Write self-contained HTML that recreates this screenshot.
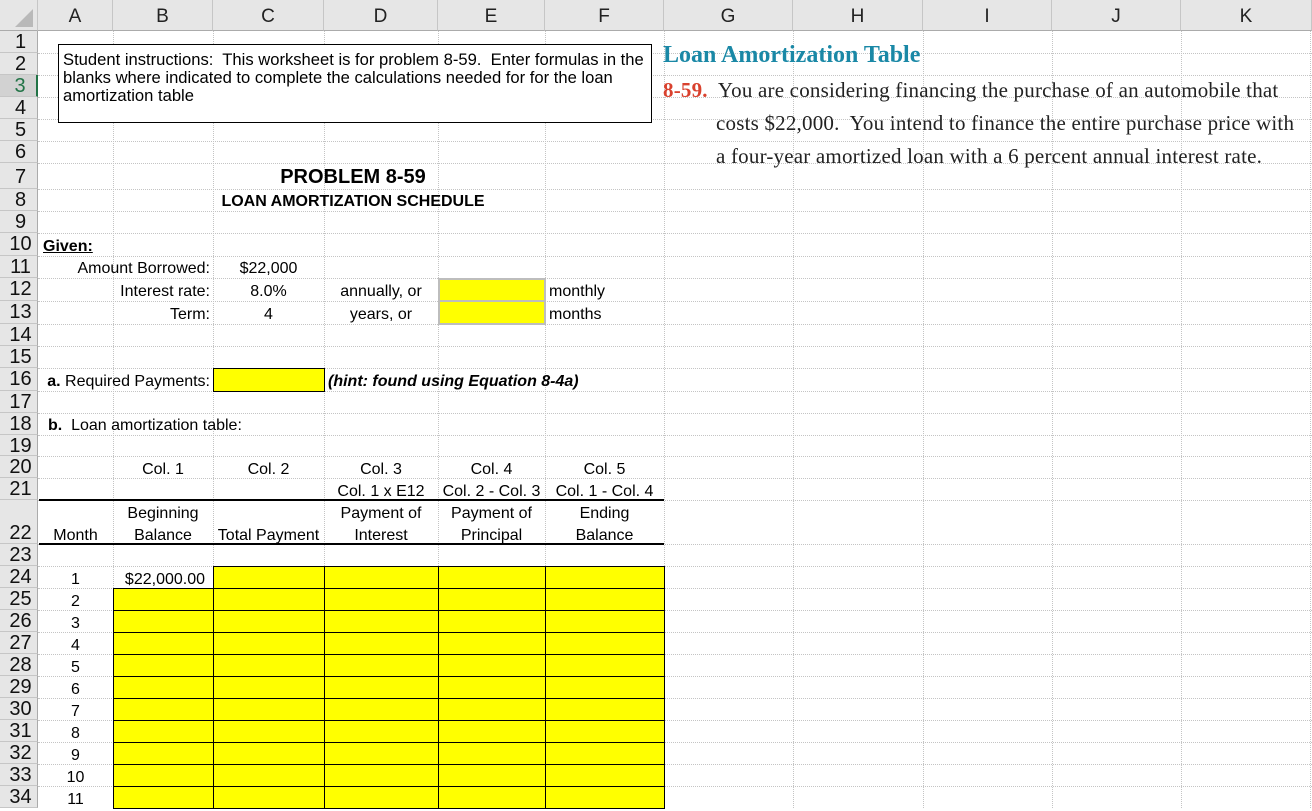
<!DOCTYPE html>
<html><head><meta charset="utf-8"><style>
*{margin:0;padding:0;box-sizing:border-box}
body{width:1312px;height:808px;overflow:hidden;background:#fff;position:relative;font-family:"Liberation Sans",Arial,sans-serif;color:#000}
.h{position:absolute;left:38px;width:1274px;height:0;border-top:1px dotted #c4c4c4}
.v{position:absolute;top:31px;height:777px;width:0;border-left:1px dotted #c4c4c4}
.ch{position:absolute;top:0;height:31px;background:#e6e6e6;border-right:1px solid #c6c6c6;border-bottom:1px solid #ababab;font-size:19px;text-align:center;line-height:34px;color:#222}
.rh{position:absolute;left:0;width:38px;background:#e6e6e6;border-right:1px solid #ababab;border-bottom:1px solid #c6c6c6;font-size:20px;line-height:22px;text-align:center;padding-left:4px;color:#111}
.c{position:absolute;font-size:16px;white-space:nowrap;line-height:22px;height:22px;margin-top:2px}
.y{position:absolute;background:#ffff00;border:1px solid #000}
</style></head><body>
<div class="ch" style="left:0;width:38px"><svg width="38" height="31" style="position:absolute;left:0;top:0"><polygon points="33,9 33,27 15,27" fill="#b9b9b9"/></svg></div>
<div class="ch" style="left:38px;width:75px">A</div>
<div class="ch" style="left:113px;width:100px">B</div>
<div class="ch" style="left:213px;width:111px">C</div>
<div class="ch" style="left:324px;width:114px">D</div>
<div class="ch" style="left:438px;width:107px">E</div>
<div class="ch" style="left:545px;width:119px">F</div>
<div class="ch" style="left:664px;width:129px">G</div>
<div class="ch" style="left:793px;width:130px">H</div>
<div class="ch" style="left:923px;width:129px">I</div>
<div class="ch" style="left:1052px;width:129px">J</div>
<div class="ch" style="left:1181px;width:131px">K</div>

<div class="h" style="top:53px"></div><div class="h" style="top:75px"></div><div class="h" style="top:97px"></div><div class="h" style="top:119px"></div><div class="h" style="top:141px"></div><div class="h" style="top:163px"></div><div class="h" style="top:189px"></div><div class="h" style="top:211px"></div><div class="h" style="top:233px"></div><div class="h" style="top:256px"></div><div class="h" style="top:278px"></div><div class="h" style="top:301px"></div><div class="h" style="top:324px"></div><div class="h" style="top:346px"></div><div class="h" style="top:368px"></div><div class="h" style="top:391px"></div><div class="h" style="top:413px"></div><div class="h" style="top:435px"></div><div class="h" style="top:456px"></div><div class="h" style="top:478px"></div><div class="h" style="top:500px"></div><div class="h" style="top:544px"></div><div class="h" style="top:566px"></div><div class="h" style="top:588px"></div><div class="h" style="top:610px"></div><div class="h" style="top:632px"></div><div class="h" style="top:654px"></div><div class="h" style="top:676px"></div><div class="h" style="top:698px"></div><div class="h" style="top:720px"></div><div class="h" style="top:742px"></div><div class="h" style="top:764px"></div><div class="h" style="top:786px"></div>
<div class="v" style="left:113px"></div><div class="v" style="left:213px"></div><div class="v" style="left:324px"></div><div class="v" style="left:438px"></div><div class="v" style="left:545px"></div><div class="v" style="left:664px"></div><div class="v" style="left:793px"></div><div class="v" style="left:923px"></div><div class="v" style="left:1052px"></div><div class="v" style="left:1181px"></div><div class="v" style="left:1310px"></div>

<div class="rh" style="top:31px;height:22px">1</div>
<div class="rh" style="top:53px;height:22px">2</div>
<div class="rh" style="top:75px;height:22px;background:#d2d2d2;color:#217346;border-right:2px solid #217346">3</div>
<div class="rh" style="top:97px;height:22px">4</div>
<div class="rh" style="top:119px;height:22px">5</div>
<div class="rh" style="top:141px;height:22px">6</div>
<div class="rh" style="top:163px;height:26px;line-height:28px">7</div>
<div class="rh" style="top:189px;height:22px">8</div>
<div class="rh" style="top:211px;height:22px">9</div>
<div class="rh" style="top:233px;height:23px">10</div>
<div class="rh" style="top:256px;height:22px">11</div>
<div class="rh" style="top:278px;height:23px">12</div>
<div class="rh" style="top:301px;height:23px">13</div>
<div class="rh" style="top:324px;height:22px">14</div>
<div class="rh" style="top:346px;height:22px">15</div>
<div class="rh" style="top:368px;height:23px">16</div>
<div class="rh" style="top:391px;height:22px">17</div>
<div class="rh" style="top:413px;height:22px">18</div>
<div class="rh" style="top:435px;height:21px">19</div>
<div class="rh" style="top:456px;height:22px">20</div>
<div class="rh" style="top:478px;height:22px">21</div>
<div class="rh" style="top:500px;height:44px;line-height:66px">22</div>
<div class="rh" style="top:544px;height:22px">23</div>
<div class="rh" style="top:566px;height:22px">24</div>
<div class="rh" style="top:588px;height:22px">25</div>
<div class="rh" style="top:610px;height:22px">26</div>
<div class="rh" style="top:632px;height:22px">27</div>
<div class="rh" style="top:654px;height:22px">28</div>
<div class="rh" style="top:676px;height:22px">29</div>
<div class="rh" style="top:698px;height:22px">30</div>
<div class="rh" style="top:720px;height:22px">31</div>
<div class="rh" style="top:742px;height:22px">32</div>
<div class="rh" style="top:764px;height:22px">33</div>
<div class="rh" style="top:786px;height:22px">34</div>

<div style="position:absolute;left:58px;top:44px;width:594px;height:79px;border:1px solid #000;background:#fff;font-size:16.6px;line-height:18px;padding:6px 0 0 4px;white-space:nowrap">Student instructions:&nbsp; This worksheet is for problem 8-59.&nbsp; Enter formulas in the<br>blanks where indicated to complete the calculations needed for for the loan<br>amortization table</div>

<div style="position:absolute;left:663px;top:42px;font-family:'Liberation Serif',serif;font-weight:bold;font-size:24px;color:#1a88a6;white-space:nowrap">Loan Amortization Table</div>
<div style="position:absolute;left:663px;top:74px;font-family:'Liberation Serif',serif;font-size:21px;letter-spacing:0.2px;line-height:33px;white-space:nowrap;color:#222"><b style="color:#d9412e">8-59.</b>&nbsp; You are considering financing the purchase of an automobile that<br><span style="padding-left:53px">costs $22,000.&nbsp; You intend to finance the entire purchase price with</span><br><span style="padding-left:53px">a four-year amortized loan with a 6 percent annual interest rate.</span></div>

<div class="c" style="left:113px;width:480px;top:165px;height:24px;line-height:24px;text-align:center;font-weight:bold;font-size:20px;margin-top:0">PROBLEM 8-59</div>
<div class="c" style="left:113px;width:480px;top:189px;text-align:center;font-weight:bold">LOAN AMORTIZATION SCHEDULE</div>

<div class="c" style="left:43px;top:234px;font-weight:bold;text-decoration:underline">Given:</div>
<div class="c" style="left:40px;width:170px;top:256px;text-align:right">Amount Borrowed:</div>
<div class="c" style="left:213px;width:111px;top:256px;text-align:center">$22,000</div>
<div class="c" style="left:40px;width:170px;top:279px;text-align:right">Interest rate:</div>
<div class="c" style="left:213px;width:111px;top:279px;text-align:center">8.0%</div>
<div class="c" style="left:324px;width:114px;top:279px;text-align:center">annually, or</div>
<div class="c" style="left:549px;top:279px">monthly</div>
<div class="c" style="left:40px;width:170px;top:302px;text-align:right">Term:</div>
<div class="c" style="left:213px;width:111px;top:302px;text-align:center">4</div>
<div class="c" style="left:324px;width:114px;top:302px;text-align:center">years, or</div>
<div class="c" style="left:549px;top:302px">months</div>
<div style="position:absolute;left:438px;top:278px;width:108px;height:47px;background:#ffff00;border:2px solid #bdbdbd"></div>
<div style="position:absolute;left:438px;top:300px;width:108px;height:2px;background:#bdbdbd"></div>

<div class="c" style="left:40px;width:170px;top:369px;text-align:right"><b>a.</b> Required Payments:</div>
<div class="y" style="left:213px;top:368px;width:112px;height:24px"></div>
<div class="c" style="left:328px;top:369px;font-weight:bold;font-style:italic">(hint: found using Equation 8-4a)</div>
<div class="c" style="left:48px;top:413px"><b>b.</b>&nbsp; Loan amortization table:</div>

<div class="c" style="left:113px;width:100px;top:457px;text-align:center">Col. 1</div>
<div class="c" style="left:213px;width:111px;top:457px;text-align:center">Col. 2</div>
<div class="c" style="left:324px;width:114px;top:457px;text-align:center">Col. 3</div>
<div class="c" style="left:438px;width:107px;top:457px;text-align:center">Col. 4</div>
<div class="c" style="left:545px;width:119px;top:457px;text-align:center">Col. 5</div>
<div class="c" style="left:324px;width:114px;top:479px;text-align:center">Col. 1 x E12</div>
<div class="c" style="left:438px;width:107px;top:479px;text-align:center">Col. 2 - Col. 3</div>
<div class="c" style="left:545px;width:119px;top:479px;text-align:center">Col. 1 - Col. 4</div>
<div style="position:absolute;left:39px;top:499px;width:625px;height:2px;background:#000"></div>
<div style="position:absolute;left:39px;top:543px;width:625px;height:2px;background:#000"></div>
<div class="c" style="left:38px;width:75px;top:523px;text-align:center">Month</div>
<div class="c" style="left:113px;width:100px;top:501px;height:44px;text-align:center">Beginning<br>Balance</div>
<div class="c" style="left:213px;width:111px;top:523px;text-align:center">Total Payment</div>
<div class="c" style="left:324px;width:114px;top:501px;height:44px;text-align:center">Payment of<br>Interest</div>
<div class="c" style="left:438px;width:107px;top:501px;height:44px;text-align:center">Payment of<br>Principal</div>
<div class="c" style="left:545px;width:119px;top:501px;height:44px;text-align:center">Ending<br>Balance</div>

<div class="y" style="left:213px;top:566px;width:452px;height:243px"></div>
<div class="y" style="left:113px;top:588px;width:101px;height:221px"></div>
<div style="position:absolute;left:324px;top:566px;width:1px;height:242px;background:#000"></div>
<div style="position:absolute;left:438px;top:566px;width:1px;height:242px;background:#000"></div>
<div style="position:absolute;left:545px;top:566px;width:1px;height:242px;background:#000"></div>
<div style="position:absolute;left:213px;top:588px;width:451px;height:1px;background:#000"></div>
<div style="position:absolute;left:113px;top:610px;width:551px;height:1px;background:#000;box-shadow:0 22px 0 #000,0 44px 0 #000,0 66px 0 #000,0 88px 0 #000,0 110px 0 #000,0 132px 0 #000,0 154px 0 #000,0 176px 0 #000"></div>
<div class="c" style="left:113px;width:92px;top:567px;text-align:right">$22,000.00</div>

<div class="c" style="left:38px;width:75px;top:567px;text-align:center">1</div>
<div class="c" style="left:38px;width:75px;top:589px;text-align:center">2</div>
<div class="c" style="left:38px;width:75px;top:611px;text-align:center">3</div>
<div class="c" style="left:38px;width:75px;top:633px;text-align:center">4</div>
<div class="c" style="left:38px;width:75px;top:655px;text-align:center">5</div>
<div class="c" style="left:38px;width:75px;top:677px;text-align:center">6</div>
<div class="c" style="left:38px;width:75px;top:699px;text-align:center">7</div>
<div class="c" style="left:38px;width:75px;top:721px;text-align:center">8</div>
<div class="c" style="left:38px;width:75px;top:743px;text-align:center">9</div>
<div class="c" style="left:38px;width:75px;top:765px;text-align:center">10</div>
<div class="c" style="left:38px;width:75px;top:787px;text-align:center">11</div>
</body></html>
